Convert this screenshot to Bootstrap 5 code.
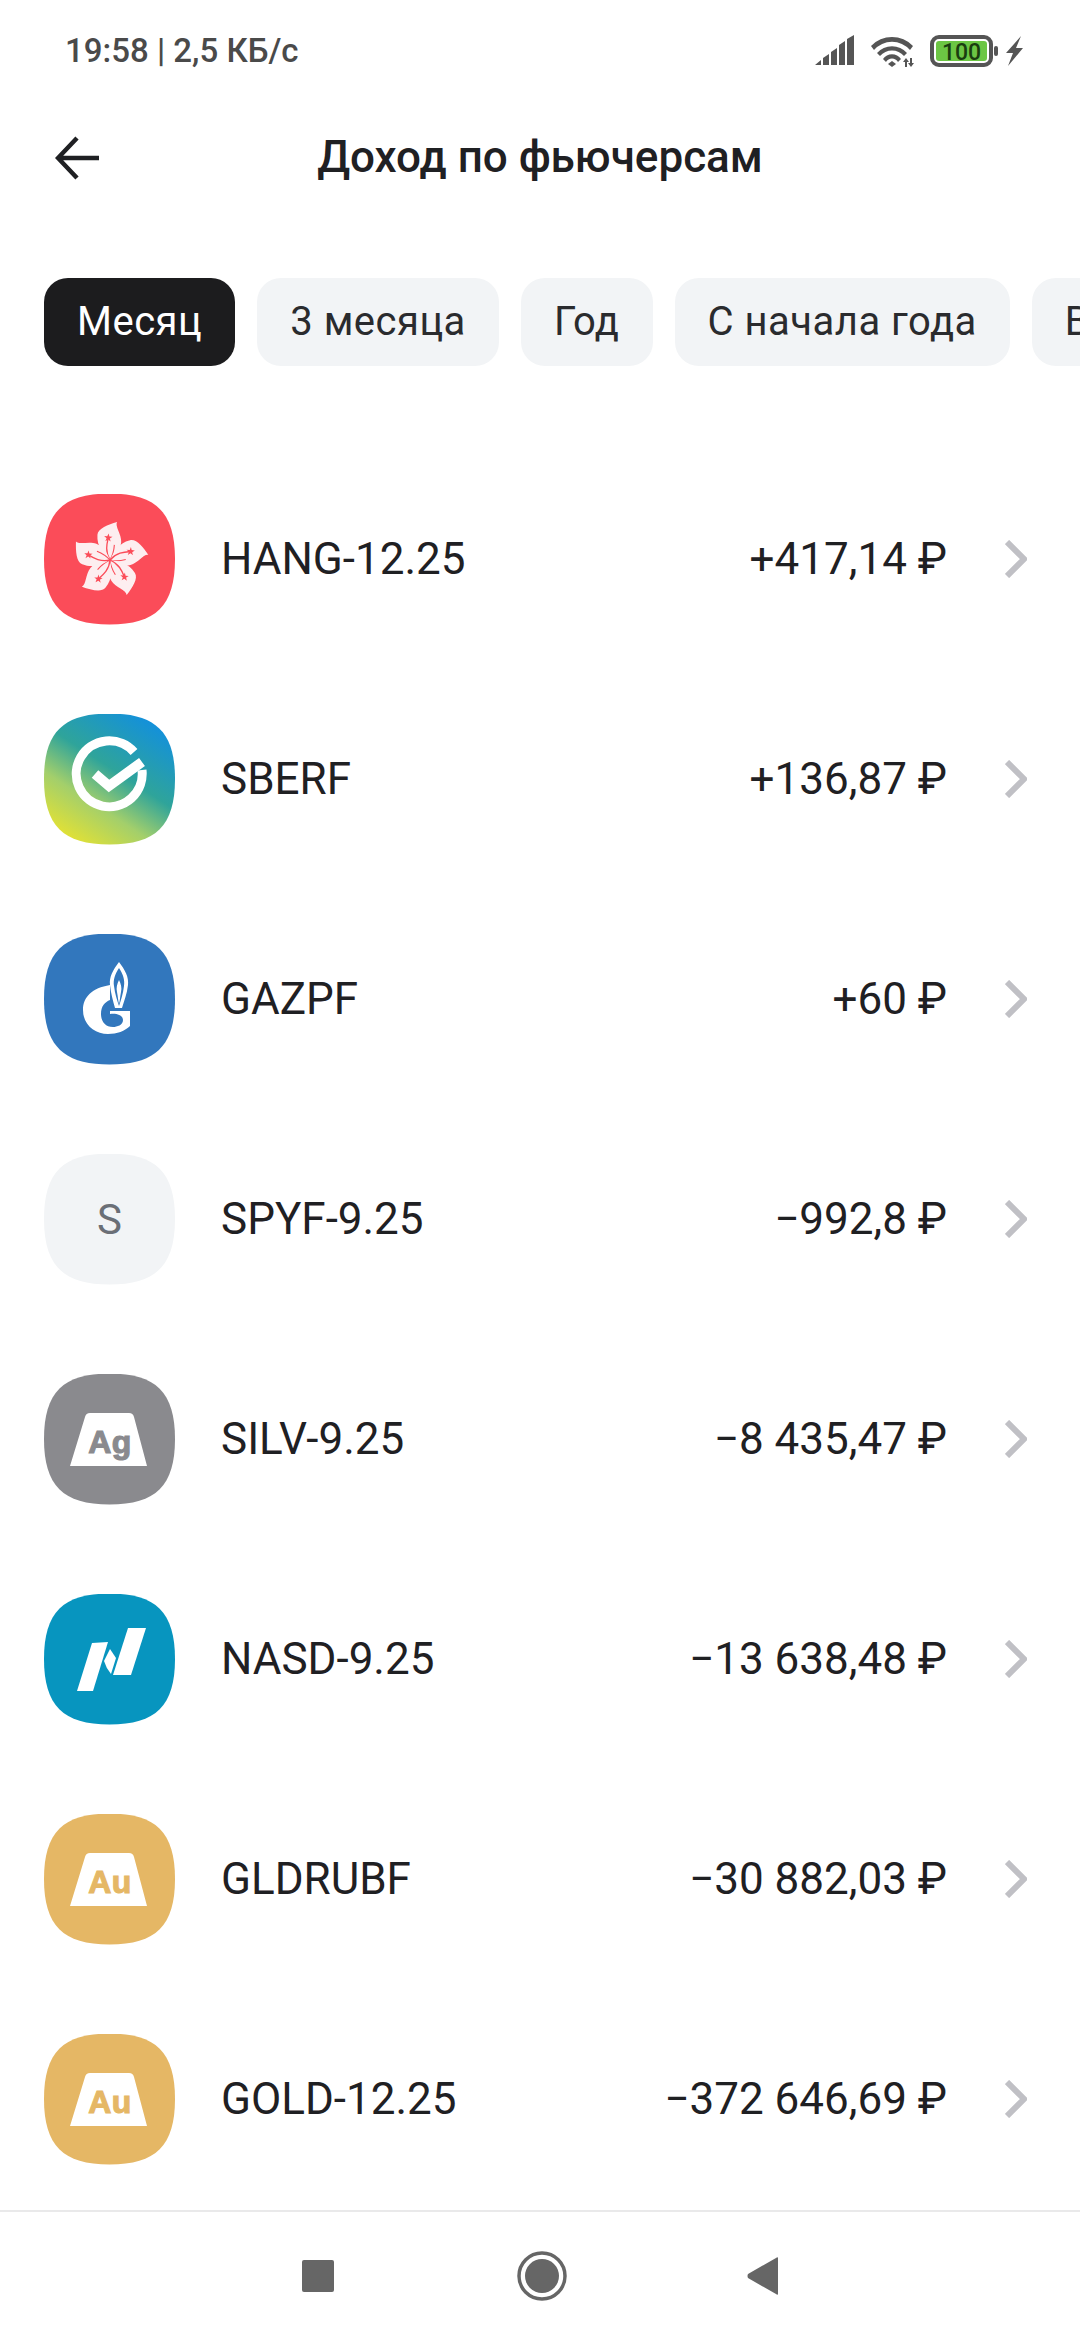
<!DOCTYPE html>
<html lang="ru">
<head>
    <meta charset="UTF-8">
    <title>Доход по фьючерсам</title>
    <link href="https://cdn.jsdelivr.net/npm/bootstrap@5.3.0/dist/css/bootstrap.min.css" rel="stylesheet">
    <style>
        html, body { width: 1080px; height: 2340px; overflow: hidden; background: #fff; }
        body { font-family: Roboto, "Liberation Sans", sans-serif; color: #1f2023; }
        .status-row { height: 100px; padding: 2px 56px 0 65px; color: #4a4a4a; font-size: 33px; font-weight: 500; }
        .top-nav { height: 115px; padding-left: 55px; }
        .top-nav h1 { font-size: 44px; font-weight: 500; margin: 0; color: #1f2023; }
        .top-title { left: 0; right: 0; top: 0; bottom: 0; }
        .tab-strip { height: 88px; margin-top: 63px; padding-left: 44px; gap: 22px; overflow: hidden; white-space: nowrap; }
        .tab-item { background: #f2f4f6; color: #2a2b2e; font-size: 40px; letter-spacing: .5px; padding: 0 33px; border-radius: 24px; flex: none; }
        .tab-item.is-on { background: #1c1c1e; color: #fff; }
        .asset-list { margin-top: 83px; }
        .asset-row { height: 220px; padding: 0 53px 0 44px; font-size: 44px; }
        .asset-ico { width: 131px; height: 131px; flex: none; margin-right: 46px; clip-path: path('M65.5 0C112 0 131 19 131 65.5C131 112 112 131 65.5 131C19 131 0 112 0 65.5C0 19 19 0 65.5 0Z'); }
        .ico-s { background: #f2f4f6; color: #6b6f76; font-size: 42px; }
        .asset-sum { margin-right: 58px; }
        .bar-label { font-family: "Liberation Sans", sans-serif; font-weight: 700; font-size: 32px; letter-spacing: .5px; stroke-width: 1.100px; }
        .bottom-bar { height: 130px; border-top: 2px solid #e9e9ea; }
    </style>
</head>
<body class="d-flex flex-column">
    <div class="status-row d-flex align-items-center justify-content-between">
        <span>19:58 | 2,5 КБ/с</span>
        <svg width="209" height="32" viewBox="0 0 209 32">
            <g fill="#555">
                <path d="M0 30l6-5v5zM8 23l6-4v11H8zM16 17l6-4v17h-6zM24 10l6-4v24h-6zM32 4l7-4v30h-7z"/>
                <path d="M56 11a29 29 0 0 1 42 0l-3 4a24 24 0 0 0-36 0z"/>
                <path d="M62 18a20 20 0 0 1 30 0l-3 3a16 16 0 0 0-24 0z"/>
                <path d="M68 24a11 11 0 0 1 18 0l-3 3a7 7 0 0 0-12 0z"/>
                <path d="M73 29l4-3 4 3-4 3z"/>
                <path d="M87 27l3-4 3 4h-2v5h-2v-5zM94 23h2v5h2l-3 4-3-4h2z" transform="translate(1 0)"/>
                <rect x="117" y="2" width="59" height="28" rx="7" fill="none" stroke="#555" stroke-width="4"/>
                <rect x="121" y="6" width="51" height="20" rx="3" fill="#6cc644"/>
                <rect x="179" y="11" width="4" height="10" rx="2"/>
                <path d="M206 1l-15 17h7l-5 13 15-18h-7z"/>
            </g>
            <text x="146.500" y="25" text-anchor="middle" font-family="Roboto, sans-serif" font-size="23" fill="#1a3d10">100</text>
        </svg>
    </div>

    <div class="top-nav position-relative d-flex align-items-center">
        <div class="top-title position-absolute d-flex align-items-center justify-content-center"><h1>Доход по фьючерсам</h1></div>
        <svg width="44" height="44" viewBox="0 0 44 44" fill="none" stroke="#1f2023" stroke-width="4.500">
            <path d="M44 22H3M22 2L3 22l19 20"/>
        </svg>
    </div>

    <div class="tab-strip d-flex">
        <div class="tab-item is-on d-flex align-items-center">Месяц</div>
        <div class="tab-item d-flex align-items-center">3 месяца</div>
        <div class="tab-item d-flex align-items-center">Год</div>
        <div class="tab-item d-flex align-items-center">С начала года</div>
        <div class="tab-item d-flex align-items-center">Всё время</div>
    </div>

    <div class="asset-list flex-grow-1">
        <div class="asset-row d-flex align-items-center">
            <svg class="asset-ico" viewBox="0 0 131 131">
                <rect width="131" height="131" fill="#fb4c59"/>
                <defs>
                    <g id="hk-petal">
                        <path d="M0 0C-6-5-13-11-13-22C-13-28-4-32 4-35C2-31 9-24 9-17C9-9 4-4 0 0Z" fill="#fdeef0"/>
                        <path d="M0 0C-5-7-4-14-3-20" fill="none" stroke="#fb4c59" stroke-width="1.200"/>
                        <path d="M0 0C3-6 3-10 3-14" fill="none" stroke="#fb4c59" stroke-width="1"/>
                        <path d="M-3-24l1 2.700h2.800l-2.300 1.700.9 2.800-2.400-1.700-2.400 1.700.9-2.800-2.300-1.700h2.800z" fill="#fb4c59"/>
                    </g>
                </defs>
                <g transform="translate(66 66) rotate(4) scale(1.100)">
                    <use href="#hk-petal"/>
                    <use href="#hk-petal" transform="rotate(72)"/>
                    <use href="#hk-petal" transform="rotate(144)"/>
                    <use href="#hk-petal" transform="rotate(216)"/>
                    <use href="#hk-petal" transform="rotate(288)"/>
                </g>
            </svg>
            <span class="flex-grow-1">HANG-12.25</span>
            <span class="asset-sum">+417,14 ₽</span>
            <svg width="22" height="38" viewBox="0 0 22 38" fill="none" stroke="#c0c0c5" stroke-width="6"><path d="M2 2l17 17L2 36"/></svg>
        </div>
        <div class="asset-row d-flex align-items-center">
            <svg class="asset-ico" viewBox="0 0 131 131">
                <defs>
                    <linearGradient id="sber-grad" x1="0.100" y1="1" x2="0.750" y2="0">
                        <stop offset="0" stop-color="#f3e626"/>
                        <stop offset="0.350" stop-color="#a3cf6b"/>
                        <stop offset="0.600" stop-color="#2fa49a"/>
                        <stop offset="1" stop-color="#1390dc"/>
                    </linearGradient>
                </defs>
                <rect width="131" height="131" fill="url(#sber-grad)"/>
                <g fill="none" stroke="#fff" stroke-width="9">
                    <path d="M90 38A33 33 0 1 0 98 56"/>
                    <path d="M51 60l14 12 33-24" stroke-width="10"/>
                </g>
            </svg>
            <span class="flex-grow-1">SBERF</span>
            <span class="asset-sum">+136,87 ₽</span>
            <svg width="22" height="38" viewBox="0 0 22 38" fill="none" stroke="#c0c0c5" stroke-width="6"><path d="M2 2l17 17L2 36"/></svg>
        </div>
        <div class="asset-row d-flex align-items-center">
            <svg class="asset-ico" viewBox="0 0 131 131">
                <rect width="131" height="131" fill="#3277bd"/>
                <path d="M75 28C81 36 85 43 84 51C83 60 80 67 78 74H71C69 67 67 60 66 51C65 43 69 36 75 28Z" fill="#fff"/>
                <path d="M75 34C79 40 81 46 80 52C79 60 77 66 75 72C73 66 71 60 70 52C69 46 71 40 75 34Z" fill="#3277bd"/>
                <path d="M75 46C77 50 78 54 77 58C76 63 76 66 75 70C74 66 74 63 73 58C72 54 73 50 75 46Z" fill="#fff"/>
                <path d="M66 51C48 54 39 63 39 76C39 91 51 100 64 100C73 100 81 97 86 92V77H66V80C74 79 79 82 79 86C79 91 73 93 69 93C61 93 57 87 57 80C57 72 61 68 66 66Z" fill="#fff"/>
            </svg>
            <span class="flex-grow-1">GAZPF</span>
            <span class="asset-sum">+60 ₽</span>
            <svg width="22" height="38" viewBox="0 0 22 38" fill="none" stroke="#c0c0c5" stroke-width="6"><path d="M2 2l17 17L2 36"/></svg>
        </div>
        <div class="asset-row d-flex align-items-center">
            <div class="asset-ico ico-s d-flex align-items-center justify-content-center">S</div>
            <span class="flex-grow-1">SPYF-9.25</span>
            <span class="asset-sum">−992,8 ₽</span>
            <svg width="22" height="38" viewBox="0 0 22 38" fill="none" stroke="#c0c0c5" stroke-width="6"><path d="M2 2l17 17L2 36"/></svg>
        </div>
        <div class="asset-row d-flex align-items-center">
            <svg class="asset-ico" viewBox="0 0 131 131">
                <rect width="131" height="131" fill="#8a8a8e"/>
                <path d="M46 39H85Q89 39 90 43L103 92H26L41 43Q42 39 46 39Z" fill="#fff"/>
                <text class="bar-label" x="66" y="79" text-anchor="middle" fill="#8a8a8e" stroke="#8a8a8e">Ag</text>
            </svg>
            <span class="flex-grow-1">SILV-9.25</span>
            <span class="asset-sum">−8 435,47 ₽</span>
            <svg width="22" height="38" viewBox="0 0 22 38" fill="none" stroke="#c0c0c5" stroke-width="6"><path d="M2 2l17 17L2 36"/></svg>
        </div>
        <div class="asset-row d-flex align-items-center">
            <svg class="asset-ico" viewBox="0 0 131 131">
                <rect width="131" height="131" fill="#0795bf"/>
                <path d="M84 34H102L87 81H69Z" fill="#fff"/>
                <path d="M48 49L64 48L49 97H33Z" fill="#fff"/>
                <path d="M66 55L72 64L67 80Q62 74 60 67Z" fill="#fff"/>
            </svg>
            <span class="flex-grow-1">NASD-9.25</span>
            <span class="asset-sum">−13 638,48 ₽</span>
            <svg width="22" height="38" viewBox="0 0 22 38" fill="none" stroke="#c0c0c5" stroke-width="6"><path d="M2 2l17 17L2 36"/></svg>
        </div>
        <div class="asset-row d-flex align-items-center">
            <svg class="asset-ico" viewBox="0 0 131 131">
                <rect width="131" height="131" fill="#e5b765"/>
                <path d="M46 39H85Q89 39 90 43L103 92H26L41 43Q42 39 46 39Z" fill="#fff"/>
                <text class="bar-label" x="66" y="79" text-anchor="middle" fill="#e5b765" stroke="#e5b765">Au</text>
            </svg>
            <span class="flex-grow-1">GLDRUBF</span>
            <span class="asset-sum">−30 882,03 ₽</span>
            <svg width="22" height="38" viewBox="0 0 22 38" fill="none" stroke="#c0c0c5" stroke-width="6"><path d="M2 2l17 17L2 36"/></svg>
        </div>
        <div class="asset-row d-flex align-items-center">
            <svg class="asset-ico" viewBox="0 0 131 131">
                <rect width="131" height="131" fill="#e5b765"/>
                <path d="M46 39H85Q89 39 90 43L103 92H26L41 43Q42 39 46 39Z" fill="#fff"/>
                <text class="bar-label" x="66" y="79" text-anchor="middle" fill="#e5b765" stroke="#e5b765">Au</text>
            </svg>
            <span class="flex-grow-1">GOLD-12.25</span>
            <span class="asset-sum">−372 646,69 ₽</span>
            <svg width="22" height="38" viewBox="0 0 22 38" fill="none" stroke="#c0c0c5" stroke-width="6"><path d="M2 2l17 17L2 36"/></svg>
        </div>
    </div>

    <div class="bottom-bar d-flex align-items-center justify-content-center">
        <svg width="476" height="50" viewBox="0 0 476 50" fill="#666" class="d-block">
            <rect x="0" y="9" width="32" height="32" rx="2"/>
            <circle cx="240" cy="25" r="23" fill="none" stroke="#666" stroke-width="3.500"/>
            <circle cx="240" cy="25" r="17"/>
            <path d="M476 7V43c0 1-1 1-2 0L446 27q-1-2 0-4L474 7c1-1 2-1 2 0Z"/>
        </svg>
    </div>
</body>
</html>
